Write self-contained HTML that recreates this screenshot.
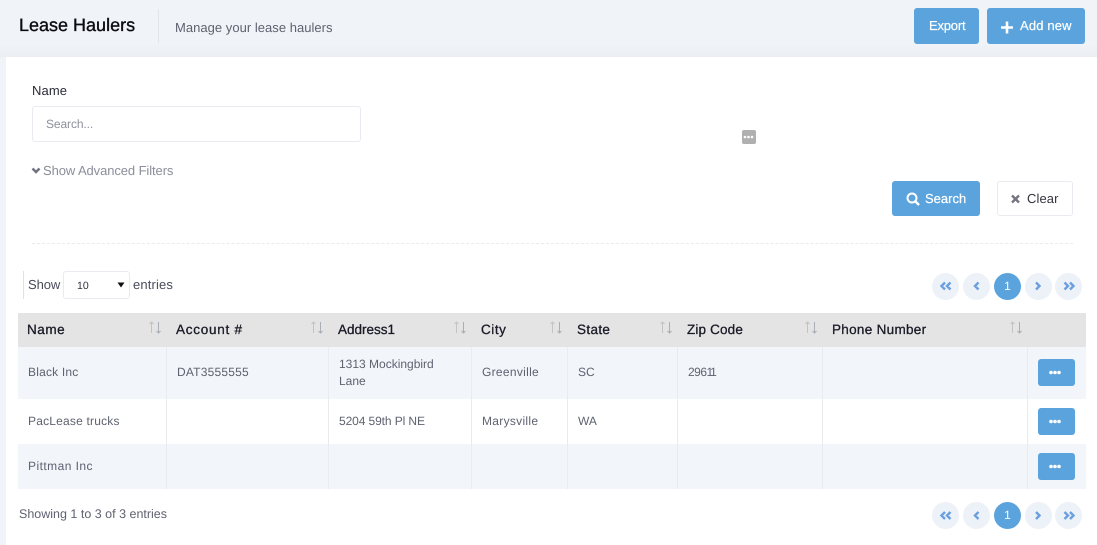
<!DOCTYPE html>
<html><head><meta charset="utf-8"><title>Lease Haulers</title>
<style>
*{box-sizing:border-box}
html,body{margin:0;padding:0}
body{width:1097px;height:545px;position:relative;overflow:hidden;background:#f0f3f7;font-family:"Liberation Sans",sans-serif;color:#595d6e;text-rendering:geometricPrecision}
.a{position:absolute}
.t{position:absolute;white-space:nowrap;line-height:16px;font-size:13px}
.h{color:#1a1a27;font-size:13.5px;-webkit-text-stroke:.3px #1a1a27;letter-spacing:.55px;top:322px}
.c{font-size:12px;letter-spacing:.2px;color:#5f6270}
.btn{position:absolute;background:#5aa3dd;border-radius:3px}
.w{color:#fff;-webkit-text-stroke:.2px #fff}
.p{position:absolute;width:27px;height:27px;border-radius:50%;background:#edf1f8}
.v{position:absolute;width:1px;top:347px;height:142px;background:#e9ebef}
svg{position:absolute;left:0;top:0;overflow:visible}
</style></head><body>
<div class="a" style="left:0;top:44px;width:1097px;height:13px;background:linear-gradient(#f0f3f7,#ebeef2)"></div>
<div class="a" style="left:6px;top:57px;width:1091px;height:488px;background:#fff"></div>
<div class="t" style="left:19px;top:15px;font-size:18px;line-height:20px;color:#0b0b12;-webkit-text-stroke:.35px #0b0b12">Lease Haulers</div>
<div class="a" style="left:158px;top:9px;width:1px;height:34px;background:#e2e5ea"></div>
<div class="t" style="left:175px;top:20px;letter-spacing:.03px;color:#5f6270">Manage your lease haulers</div>
<div class="btn" style="left:914px;top:8px;width:65px;height:36px"></div>
<div class="t w" style="left:929px;top:18px;letter-spacing:-.2px">Export</div>
<div class="btn" style="left:987px;top:8px;width:98px;height:36px"></div>
<div class="t w" style="left:1020px;top:18px;letter-spacing:.15px">Add new</div>
<div class="t" style="left:32px;top:83px;color:#2b2b38;letter-spacing:.1px">Name</div>
<div class="a" style="left:32px;top:106px;width:329px;height:36px;border:1px solid #e9ebf1;border-radius:3px;background:#fff"></div>
<div class="t" style="left:46px;top:116px;font-size:12px;color:#8f919c;letter-spacing:-.1px">Search...</div>
<div class="t" style="left:43px;top:163px;color:#8b8e9a;letter-spacing:-.09px">Show Advanced Filters</div>
<div class="a" style="left:742px;top:130px;width:14px;height:14px;background:#b0b0b0;border-radius:2px"></div>
<div class="btn" style="left:892px;top:181px;width:88px;height:35px"></div>
<div class="t w" style="left:925px;top:191px">Search</div>
<div class="a" style="left:997px;top:181px;width:76px;height:35px;border:1px solid #e9ebf1;border-radius:3px;background:#fff"></div>
<div class="t" style="left:1027px;top:191px;color:#33343f;letter-spacing:.1px">Clear</div>
<div class="a" style="left:32px;top:243px;width:1041px;height:0;border-top:1px dashed #e9ebf1"></div>

<div class="a" style="left:23px;top:271px;width:1px;height:28px;background:#dfe2e7"></div>
<div class="t" style="left:28px;top:277px;letter-spacing:-.1px;color:#4a4c5a">Show</div>
<div class="a" style="left:63px;top:271px;width:67px;height:28px;border:1px solid #e9ebf1;border-radius:3px;background:#fff"></div>
<div class="t" style="left:77px;top:278px;font-size:10.5px;color:#33343f">10</div>
<div class="t" style="left:133px;top:277px;letter-spacing:.15px;color:#4a4c5a">entries</div>

<div class="p" style="left:932px;top:273px"></div><div class="p" style="left:963px;top:273px"></div>
<div class="p" style="left:994px;top:273px;background:#5aa3dd"></div>
<div class="p" style="left:1025px;top:273px"></div><div class="p" style="left:1055px;top:273px"></div>
<div class="p" style="left:932px;top:502px"></div><div class="p" style="left:963px;top:502px"></div>
<div class="p" style="left:994px;top:502px;background:#5aa3dd"></div>
<div class="p" style="left:1025px;top:502px"></div><div class="p" style="left:1055px;top:502px"></div>
<div class="t" style="left:994px;width:27px;text-align:center;top:278px;font-size:12px;color:#fff">1</div>
<div class="t" style="left:994px;width:27px;text-align:center;top:507px;font-size:12px;color:#fff">1</div>

<div class="a" style="left:18px;top:313px;width:1068px;height:34px;background:#e4e4e4"></div>
<div class="a" style="left:18px;top:347px;width:1068px;height:52px;background:#f2f5fa"></div>
<div class="a" style="left:18px;top:444px;width:1068px;height:45px;background:#f2f5fa"></div>
<div class="v" style="left:166px"></div><div class="v" style="left:328px"></div><div class="v" style="left:471px"></div>
<div class="v" style="left:567px"></div><div class="v" style="left:677px"></div><div class="v" style="left:822px"></div><div class="v" style="left:1027px"></div>

<div class="t h" style="left:27px">Name</div>
<div class="t h" style="left:176px;letter-spacing:.75px">Account #</div>
<div class="t h" style="left:338px;letter-spacing:0">Address1</div>
<div class="t h" style="left:481px">City</div>
<div class="t h" style="left:577px;letter-spacing:.35px">State</div>
<div class="t h" style="left:687px;letter-spacing:.15px">Zip Code</div>
<div class="t h" style="left:832px;letter-spacing:.3px">Phone Number</div>

<div class="t c" style="left:28px;top:364px">Black Inc</div>
<div class="t c" style="left:177px;top:364px;letter-spacing:.2px">DAT3555555</div>
<div class="t c" style="left:339px;top:356px;letter-spacing:0">1313 Mockingbird</div>
<div class="t c" style="left:339px;top:373px;letter-spacing:0">Lane</div>
<div class="t c" style="left:482px;top:364px;letter-spacing:.3px">Greenville</div>
<div class="t c" style="left:578px;top:364px;letter-spacing:0">SC</div>
<div class="t c" style="left:688px;top:364px;letter-spacing:0"><span style="letter-spacing:-.5px">296</span><span style="letter-spacing:-2.2px">11</span></div>
<div class="t c" style="left:28px;top:413px">PacLease trucks</div>
<div class="t c" style="left:339px;top:413px;letter-spacing:-.1px">5204 59th Pl NE</div>
<div class="t c" style="left:482px;top:413px;letter-spacing:.3px">Marysville</div>
<div class="t c" style="left:578px;top:413px;letter-spacing:0">WA</div>
<div class="t c" style="left:28px;top:458px;letter-spacing:.45px">Pittman Inc</div>
<div class="t" style="left:19px;top:506px;font-size:12.5px;letter-spacing:0;color:#5f6270">Showing 1 to 3 of 3 entries</div>

<div class="btn" style="left:1038px;top:359px;width:37px;height:27px"></div>
<div class="btn" style="left:1038px;top:408px;width:37px;height:27px"></div>
<div class="btn" style="left:1038px;top:453px;width:37px;height:27px"></div>

<svg width="1097" height="545" viewBox="0 0 1097 545">
<path d="M1007 21.500v12M1001 27.500h12" stroke="#fff" stroke-width="2.600" fill="none"/>
<g fill="#fff"><circle cx="745" cy="137" r="1.300"/><circle cx="748.500" cy="137" r="1.300"/><circle cx="752" cy="137" r="1.300"/>
<circle cx="1051" cy="372.500" r="1.800"/><circle cx="1055" cy="372.500" r="1.800"/><circle cx="1059" cy="372.500" r="1.800"/>
<circle cx="1051" cy="421.500" r="1.800"/><circle cx="1055" cy="421.500" r="1.800"/><circle cx="1059" cy="421.500" r="1.800"/>
<circle cx="1051" cy="466.500" r="1.800"/><circle cx="1055" cy="466.500" r="1.800"/><circle cx="1059" cy="466.500" r="1.800"/></g>
<path d="M32.500 168.500l3.500 3.500 3.500-3.500" stroke="#6f7280" stroke-width="2.500" fill="none"/>
<circle cx="912" cy="198" r="4.500" stroke="#fff" stroke-width="2" fill="none"/><path d="M915.500 201.500l3.500 3.500" stroke="#fff" stroke-width="2.500"/>
<path d="M1012 195.500l7 7M1019 195.500l-7 7" stroke="#74757f" stroke-width="2.400"/>
<path d="M117.500 282.500h7l-3.500 5z" fill="#111"/>
<g stroke="#c3c3c3" stroke-width="1" fill="none">
<path d="M151.500 333v-11M149.500 324l2-2 2 2"/><path d="M313.500 333v-11M311.500 324l2-2 2 2"/><path d="M456.500 333v-11M454.500 324l2-2 2 2"/><path d="M552.500 333v-11M550.500 324l2-2 2 2"/><path d="M662.500 333v-11M660.500 324l2-2 2 2"/><path d="M807.500 333v-11M805.500 324l2-2 2 2"/><path d="M1012.500 333v-11M1010.500 324l2-2 2 2"/>
</g>
<g stroke="#a9adb5" stroke-width="1" fill="none">
<path d="M158.500 322v11M156.500 331l2 2 2-2"/><path d="M320.500 322v11M318.500 331l2 2 2-2"/><path d="M463.500 322v11M461.500 331l2 2 2-2"/><path d="M559.500 322v11M557.500 331l2 2 2-2"/><path d="M669.500 322v11M667.500 331l2 2 2-2"/><path d="M814.500 322v11M812.500 331l2 2 2-2"/><path d="M1019.500 322v11M1017.500 331l2 2 2-2"/>
</g>
<g stroke="#6a9fe0" stroke-width="2.400" fill="none">
<path d="M945 282.500l-3.500 3.500 3.500 3.500M950.500 282.500l-3.500 3.500 3.500 3.500M978.500 282.500l-3.500 3.500 3.500 3.500M1036 282.500l3.500 3.500-3.500 3.500M1064.500 282.500l3.500 3.500-3.500 3.500M1070 282.500l3.500 3.500-3.500 3.500"/>
<path d="M945 512l-3.500 3.500 3.500 3.500M950.500 512l-3.500 3.500 3.500 3.500M978.500 512l-3.500 3.500 3.500 3.500M1036 512l3.500 3.500-3.500 3.500M1064.500 512l3.500 3.500-3.500 3.500M1070 512l3.500 3.500-3.500 3.500"/>
</g>
</svg>
</body></html>
